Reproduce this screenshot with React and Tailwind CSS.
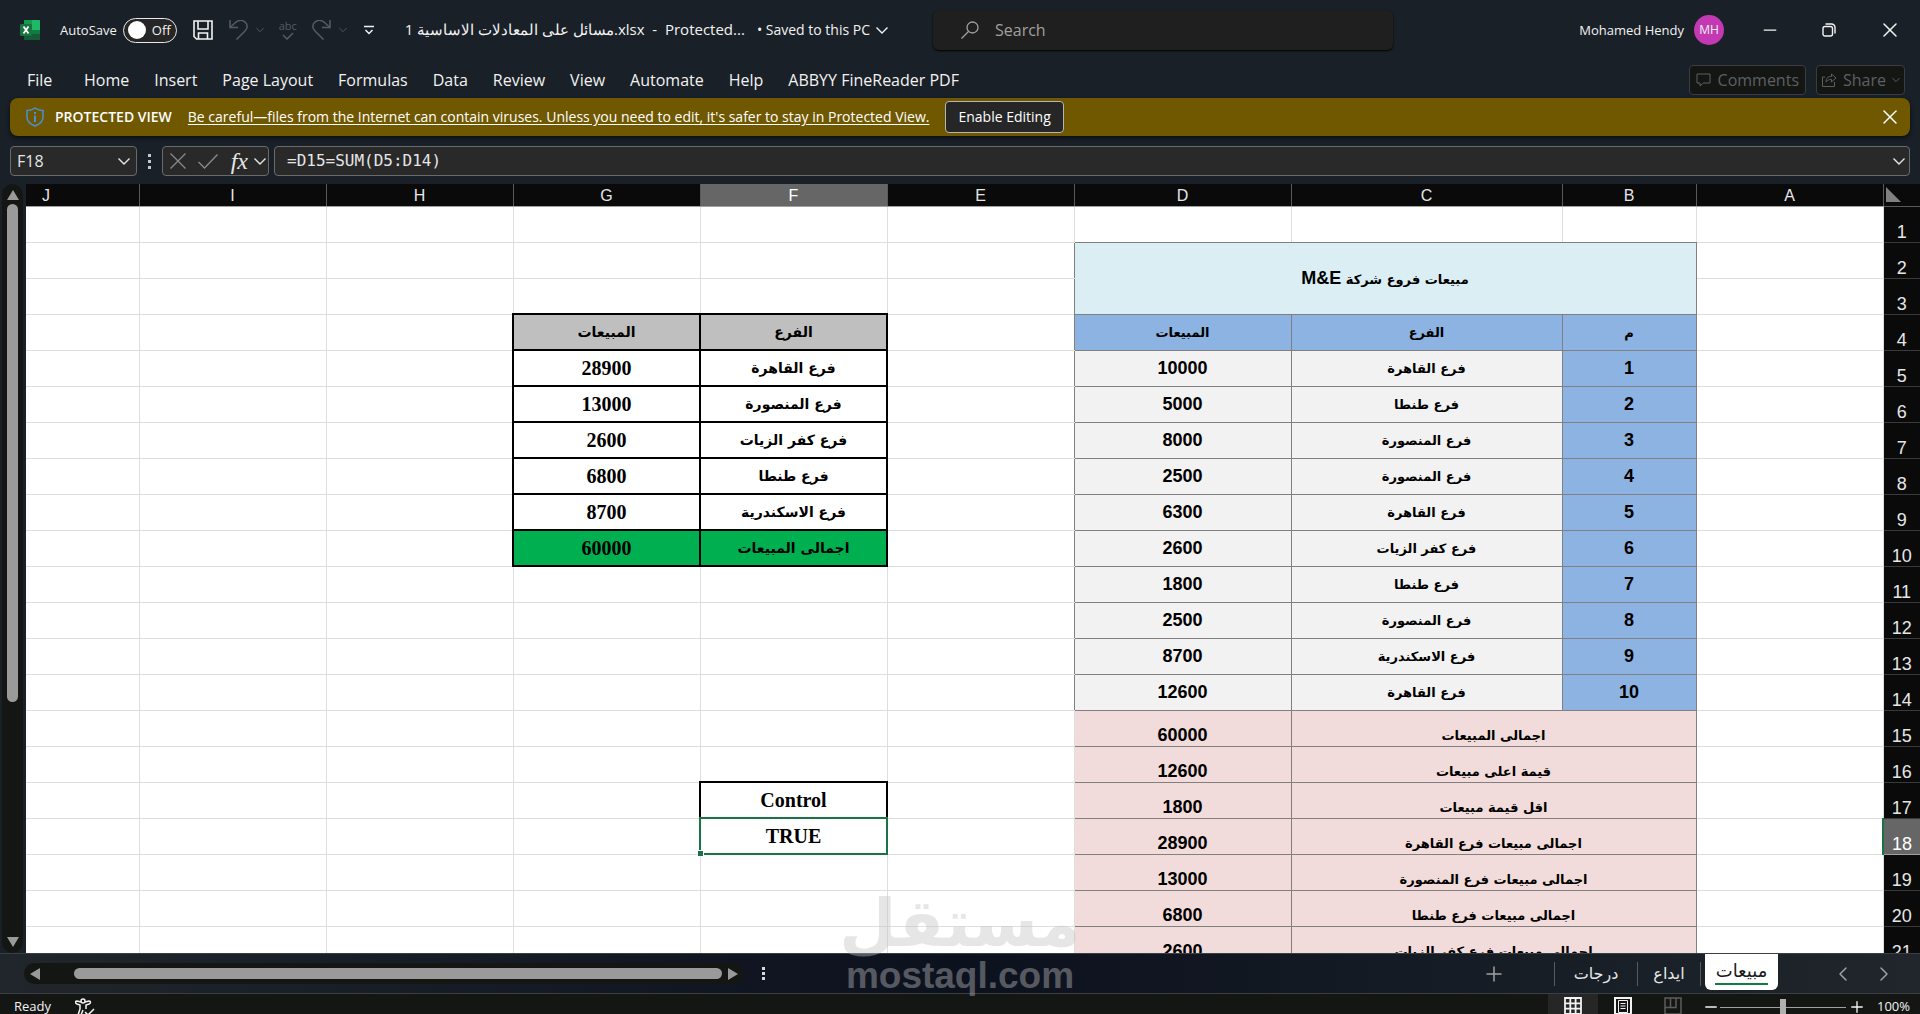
import { ChevronLeft, ChevronRight, Minus, Plus, X } from 'lucide-react';

const ribbonTabs = [
  'File',
  'Home',
  'Insert',
  'Page Layout',
  'Formulas',
  'Data',
  'Review',
  'View',
  'Automate',
  'Help',
  'ABBYY FineReader PDF',
];

const columns = [
  { name: 'J', width: '' },
  { name: 'I', width: 'w-[187px]' },
  { name: 'H', width: 'w-[187px]' },
  { name: 'G', width: 'w-[187px]' },
  { name: 'F', width: 'w-[187px]' },
  { name: 'E', width: 'w-[187px]' },
  { name: 'D', width: 'w-[217px]' },
  { name: 'C', width: 'w-[271px]' },
  { name: 'B', width: 'w-[134px]' },
  { name: 'A', width: 'w-[187px]' },
];

const sales = [
  ['فرع القاهرة', 10000],
  ['فرع طنطا', 5000],
  ['فرع المنصورة', 8000],
  ['فرع المنصورة', 2500],
  ['فرع القاهرة', 6300],
  ['فرع كفر الزيات', 2600],
  ['فرع طنطا', 1800],
  ['فرع المنصورة', 2500],
  ['فرع الاسكندرية', 8700],
  ['فرع القاهرة', 12600],
];

// rows 15 and down
const totals = [
  ['اجمالى المبيعات', 60000],
  ['قيمة اعلى مبيعات', 12600],
  ['اقل قيمة مبيعات', 1800],
  ['اجمالى مبيعات فرع القاهرة', 28900],
  ['اجمالى مبيعات فرع المنصورة', 13000],
  ['اجمالى مبيعات فرع طنطا', 6800],
  ['اجمالى مبيعات فرع كفر الزيات', 2600],
];

// rows 4 to 10, columns F and G
const branches = [
  ['الفرع', 'المبيعات'],
  ['فرع القاهرة', 28900],
  ['فرع المنصورة', 13000],
  ['فرع كفر الزيات', 2600],
  ['فرع طنطا', 6800],
  ['فرع الاسكندرية', 8700],
  ['اجمالى المبيعات', 60000],
];

const rows = Array.from({ length: 21 }, (_, i) => i + 1);

const arabic = "font-['DejaVu_Sans',sans-serif] text-sm leading-none font-bold";
const arabicSmall = "font-['DejaVu_Sans',sans-serif] text-[13px] leading-none font-bold";
const number = 'text-lg leading-none font-bold';
const serif = "font-['Liberation_Serif',serif] text-xl leading-none font-bold";
const gray = 'border-r border-b border-[#808080]';

const Chevron = ({ className = 'h-[7px] w-3' }) => (
  <svg className={className} viewBox="0 0 12 7" fill="none" stroke="currentColor" strokeWidth="1.400">
    <path d="M.5 .5L6 6 11.500 .5" />
  </svg>
);

const ExcelLogo = () => (
  <svg className="h-5 w-5" viewBox="0 0 20 20">
    <path d="M4 0h15a1 1 0 0 1 1 1v18a1 1 0 0 1-1 1H4z" fill="#107c41" />
    <path d="M4 0h8v8H4z" fill="#169a4d" />
    <path d="M12 0h7a1 1 0 0 1 1 1v9h-8z" fill="#1fb866" />
    <path d="M4 14h16v5a1 1 0 0 1-1 1H4z" fill="#155c35" />
    <rect x="0" y="4" width="12" height="12" rx="1" fill="#17733f" />
    <path d="M3.500 6.500l5 7M8.500 6.500l-5 7" stroke="#fff" strokeWidth="1.800" />
  </svg>
);

const SaveIcon = () => (
  <svg className="h-5 w-5" viewBox="0 0 20 20" fill="none" stroke="#f2f2f2" strokeWidth="1.600">
    <path d="M1 1h18v18H3.500L1 16.500z" />
    <path d="M5 1v8h10V1M5.500 19v-6h9v6" />
  </svg>
);

const UndoIcon = ({ flip }) => (
  <svg
    className={flip ? 'h-5 w-[19px] -scale-x-100' : 'h-5 w-[19px]'}
    viewBox="0 0 19 20"
    fill="none"
    stroke="#575c60"
    strokeWidth="1.500"
  >
    <path d="M1 0v7.500h8" />
    <path d="M1 7.500L6.500 2.500C10-.5 14 0 16.500 2.500s2 6-.5 8.500L7.500 19.500" />
  </svg>
);

const TitleBar = () => (
  <header className="flex h-15 shrink-0 items-center text-sm text-[#f2f2f2]">
    <div className="flex flex-1 items-center">
      <div className="ml-5">
        <ExcelLogo />
      </div>
      <label className="ml-5 flex items-center gap-1.5 text-[13px]">
        AutoSave
        <input type="checkbox" role="switch" className="peer sr-only" />
        <span className="flex h-[25px] w-[54px] items-center gap-1.5 rounded-full border border-[#e8e8e8] bg-[#262626] pl-1">
          <span className="h-[18px] w-[18px] rounded-full bg-white" />
          Off
        </span>
      </label>
      <button aria-label="Save" className="ml-4">
        <SaveIcon />
      </button>
      <button aria-label="Undo" className="ml-4 flex items-center gap-2 text-[#575c60]">
        <UndoIcon />
        <Chevron className="h-1.5 w-2" />
      </button>
      <button aria-label="Spelling" className="ml-3.5 flex w-5 flex-col items-center text-[11px] leading-3 text-[#575c60]">
        abc
        <svg className="h-2 w-3" viewBox="0 0 12 8" fill="none" stroke="currentColor" strokeWidth="1.500">
          <path d="M1 3l4 4 6-6" />
        </svg>
      </button>
      <button aria-label="Redo" className="ml-3.5 flex items-center gap-2 text-[#575c60]">
        <UndoIcon flip />
        <Chevron className="h-1.5 w-2" />
      </button>
      <button aria-label="Customize Quick Access Toolbar" className="ml-4">
        <svg className="h-3 w-3" viewBox="0 0 12 12" fill="none" stroke="#f2f2f2" strokeWidth="1.500">
          <path d="M1 2.500h10M2.500 6L6 9.500 9.500 6" />
        </svg>
      </button>
      <h1 className="ml-[30px] text-[15px] whitespace-pre">
        مسائل على المعادلات الاساسية 1.xlsx  -  Protected...
      </h1>
      <button className="ml-3 flex items-center gap-1.5 whitespace-nowrap">
        • Saved to this PC
        <Chevron />
      </button>
    </div>
    <label className="flex h-10 w-[460px] items-center gap-4 rounded-md bg-[#1f1f1f] px-7 text-[#a0a0a0] shadow-[0_1px_2px_#000000]">
      <svg className="h-[18px] w-[18px]" viewBox="0 0 18 18" fill="none" stroke="currentColor" strokeWidth="1.300">
        <circle cx="11.500" cy="6.500" r="5.500" />
        <path d="M7.500 10.500L.5 17.500" />
      </svg>
      <input
        type="search"
        placeholder="Search"
        aria-label="Search"
        className="flex-1 bg-transparent text-base outline-none placeholder:text-[#a0a0a0]"
      />
    </label>
    <div className="flex w-[527px] items-center justify-end pr-[18px]">
      <span className="text-[13px]">Mohamed Hendy</span>
      <span className="ml-2.5 flex h-[30px] w-[30px] items-center justify-center rounded-full bg-[#c239b3] text-xs">
        MH
      </span>
      <button aria-label="Minimize" className="ml-9">
        <Minus size={20} strokeWidth={1.5} />
      </button>
      <button aria-label="Restore" className="ml-[42px]">
        <svg className="h-3.5 w-3.5" viewBox="0 0 14 14" fill="none" stroke="currentColor" strokeWidth="1.400">
          <rect x="1" y="3.500" width="9.500" height="9.500" rx="2" />
          <path d="M3.500 1h6A3.500 3.500 0 0 1 13 4.500v6" />
        </svg>
      </button>
      <button aria-label="Close" className="ml-[42px]">
        <X size={24} strokeWidth={1.5} />
      </button>
    </div>
  </header>
);

const Ribbon = () => (
  <nav className="flex h-[38px] shrink-0 items-center gap-[25px] pt-0.5 pr-[15px] pl-[27px] text-base text-[#f2f2f2]">
    {ribbonTabs.map((tab) => (
      <button key={tab} className="min-w-8 text-left whitespace-nowrap">
        {tab}
      </button>
    ))}
    <div className="ml-auto flex gap-2.5 text-[#5c6063]">
      <button className="flex h-[30px] items-center gap-1.5 rounded border border-[#3a3d3f] bg-[#141614] px-1.5">
        <svg className="h-4 w-4" viewBox="0 0 16 16" fill="none" stroke="currentColor">
          <path d="M1 2h13v9H7.500L4 14v-3H1z" />
        </svg>
        Comments
      </button>
      <button className="flex h-[30px] items-center gap-1.5 rounded border border-[#3a3d3f] bg-[#141614] px-1">
        <svg className="h-4 w-4" viewBox="0 0 16 16" fill="none" stroke="currentColor">
          <path d="M4 5H1.500v9.500h12V10M5 10c0-4 2-5.500 5.500-5.500V2L15 6l-4.500 4V7.500C8 7.500 6.500 8 5 10z" />
        </svg>
        Share
        <Chevron className="h-1.5 w-2" />
      </button>
    </div>
  </nav>
);

const ProtectedView = () => (
  <div className="mx-2.5 flex h-[38px] shrink-0 items-center rounded-lg bg-[#6f5800] pr-2 pl-4 text-sm text-white shadow-[0_2px_4px_#0b0e12]">
    <svg className="h-5 w-[18px]" viewBox="0 0 18 20" fill="none" stroke="#4a90d9" strokeWidth="1.500">
      <path d="M9 1c2 1.500 4.500 2.500 8 2.500V10c0 4-3 7-8 9-5-2-8-5-8-9V3.500C4.500 3.500 7 2.500 9 1z" />
      <path d="M9 5v2M9 8.500V15" strokeWidth="2" />
    </svg>
    <strong className="ml-[11px] font-semibold">PROTECTED VIEW</strong>
    <a href="#protected" className="ml-4 underline underline-offset-2">
      Be careful—files from the Internet can contain viruses. Unless you need to edit, it's safer to stay in
      Protected View.
    </a>
    <button className="ml-4 h-8 rounded border border-[#b5b5b5] bg-[#262626] px-3">Enable Editing</button>
    <button aria-label="Close message" className="ml-auto">
      <X size={24} strokeWidth={1.5} />
    </button>
  </div>
);

const FormulaBar = () => (
  <div className="mx-2.5 mt-2.5 mb-2 flex h-[30px] shrink-0 text-[#e6e6e6]">
    <div className="flex w-[127px] items-center rounded border border-[#6a6a6a] bg-[#292929] px-1.5">
      <input
        aria-label="Name Box"
        defaultValue="F18"
        className="w-full min-w-0 flex-1 bg-transparent text-base outline-none"
      />
      <button aria-label="Open name list">
        <Chevron />
      </button>
    </div>
    <span className="flex w-[25px] flex-col items-center justify-center gap-[3px]">
      <i className="h-[3px] w-[3px] bg-[#c8c8c8]" />
      <i className="h-[3px] w-[3px] bg-[#c8c8c8]" />
      <i className="h-[3px] w-[3px] bg-[#c8c8c8]" />
    </span>
    <div className="flex w-[107px] items-center justify-between rounded border border-[#6a6a6a] bg-[#292929] pr-0.5 pl-[7px]">
      <button aria-label="Cancel" className="text-[#8a8a8a]">
        <svg className="h-4 w-4" viewBox="0 0 16 16" fill="none" stroke="currentColor" strokeWidth="1.300">
          <path d="M.5 .5l15 15M15.500 .5l-15 15" />
        </svg>
      </button>
      <button aria-label="Enter" className="text-[#8a8a8a]">
        <svg className="h-4 w-5" viewBox="0 0 20 16" fill="none" stroke="currentColor" strokeWidth="1.300">
          <path d="M.5 9l6 6L19.500 1.500" />
        </svg>
      </button>
      <button
        aria-label="Insert Function"
        className="flex items-center gap-1.5 font-['Liberation_Serif',serif] text-2xl leading-none italic"
      >
        fx
        <Chevron />
      </button>
    </div>
    <div className="ml-[5px] flex flex-1 items-center rounded border border-[#6a6a6a] bg-[#292929] pr-1 pl-3">
      <input
        aria-label="Formula Bar"
        defaultValue="=D15=SUM(D5:D14)"
        className="flex-1 bg-transparent font-['DejaVu_Sans_Mono',monospace] text-base outline-none"
      />
      <button aria-label="Expand Formula Bar">
        <Chevron />
      </button>
    </div>
  </div>
);

const BranchCell = ({ row, index }) => {
  const value = branches[row - 4][index];
  const fill = row === 4 ? 'bg-[#bfbfbf]' : row === 10 ? 'bg-[#00b050]' : 'bg-white';
  return (
    <td className={`border-2 border-black ${fill} ${typeof value === 'number' ? serif : arabic}`}>{value}</td>
  );
};

const EmptyCell = ({ line = 'border-[#dedede]' }) => <td className={`border-r border-b ${line}`} />;

const ColumnF = ({ row }) => {
  if (row >= 4 && row <= 10) return <BranchCell row={row} index={0} />;
  if (row === 17) {
    return <td className={`border-2 border-black border-b-[#1a7344] ${serif}`}>Control</td>;
  }
  if (row === 18) {
    return (
      <td className={`relative border-2 border-[#1a7344] ${serif}`}>
        TRUE
        <span className="absolute -bottom-1 -left-1 h-[7px] w-[7px] border border-white bg-[#1a7344]" />
      </td>
    );
  }
  return <EmptyCell />;
};

const SalesCells = ({ row }) => {
  if (row === 1) {
    return (
      <>
        <EmptyCell line="border-[#dedede] border-b-[#808080]" />
        <EmptyCell line="border-[#dedede] border-b-[#808080]" />
        <EmptyCell line="border-[#dedede] border-b-[#808080]" />
      </>
    );
  }
  if (row === 2) {
    return (
      <td colSpan={3} rowSpan={2} dir="rtl" className={`bg-[#daeef3] ${gray} ${arabicSmall}`}>
        مبيعات فروع شركة <span className="font-['Liberation_Sans',Arial,sans-serif] text-lg leading-none">M&amp;E</span>
      </td>
    );
  }
  if (row === 3) return null;
  if (row === 4) {
    return (
      <>
        <td className={`bg-[#8db3e2] ${gray} ${arabicSmall}`}>المبيعات</td>
        <td className={`bg-[#8db3e2] ${gray} ${arabicSmall}`}>الفرع</td>
        <td className={`bg-[#8db3e2] ${gray} ${arabicSmall}`}>م</td>
      </>
    );
  }
  if (row <= 14) {
    const [branch, amount] = sales[row - 5];
    return (
      <>
        <td className={`bg-[#f2f2f2] ${gray} ${number}`}>{amount}</td>
        <td className={`bg-[#f2f2f2] ${gray} ${arabicSmall}`}>{branch}</td>
        <td className={`bg-[#8db3e2] ${gray} ${number}`}>{row - 4}</td>
      </>
    );
  }
  const [label, amount] = totals[row - 15];
  return (
    <>
      <td className={`bg-[#f2dcdb] pt-3.5 ${gray} ${number}`}>{amount}</td>
      <td colSpan={2} className={`bg-[#f2dcdb] pt-3.5 ${gray} ${arabicSmall}`}>
        {label}
      </td>
    </>
  );
};

const Sheet = () => (
  <div className="min-w-0 flex-1 overflow-hidden bg-white">
    <table className="w-full table-fixed border-collapse text-center leading-none text-black">
      <colgroup>
        {columns.map((col) => (
          <col key={col.name} className={col.width} />
        ))}
        <col className="w-[37px]" />
      </colgroup>
      <thead>
        <tr className="h-[22px] bg-[#0a0a0a] text-base leading-none text-[#e6e6e6]">
          {columns.map((col) => (
            <th
              key={col.name}
              className={`border-r border-b border-[#5a5a5a] border-b-[#a0a0a0] pt-0.5 font-normal ${
                col.name === 'F' ? 'bg-[#666666] text-white' : ''
              } ${col.name === 'J' ? 'pl-4 text-left' : ''}`}
            >
              {col.name}
            </th>
          ))}
          <th className="border-b border-[#5a5a5a]">
            <svg className="ml-0.5 h-[15px] w-[15px]" viewBox="0 0 15 15">
              <path d="M0 0v15h15z" fill="#808080" />
            </svg>
          </th>
        </tr>
      </thead>
      <tbody>
        {rows.map((row) => (
          <tr key={row} className="h-9">
            <EmptyCell />
            <EmptyCell />
            <EmptyCell />
            {row >= 4 && row <= 10 ? <BranchCell row={row} index={1} /> : <EmptyCell />}
            <ColumnF row={row} />
            <EmptyCell line={row > 1 && row < 15 ? 'border-[#dedede] border-r-[#808080]' : 'border-[#dedede]'} />
            <SalesCells row={row} />
            <EmptyCell />
            <th
              className={
                row === 18
                  ? 'border-b border-l-2 border-[#a0a0a0] border-l-[#1a7344] bg-[#666666] pt-4 text-lg leading-none font-normal text-white'
                  : 'border-b border-[#3a3a3a] bg-[#0a0a0a] pt-4 text-lg leading-none font-normal text-[#e6e6e6]'
              }
            >
              {row}
            </th>
          </tr>
        ))}
      </tbody>
    </table>
  </div>
);

const VerticalScrollbar = () => (
  <div className="mr-[3px] ml-0.5 flex w-[21px] shrink-0 flex-col items-center rounded-full bg-[#141614] py-1.5">
    <svg className="h-2.5 w-3" viewBox="0 0 12 10">
      <path d="M6 0l6 10H0z" fill="#9a9a9a" />
    </svg>
    <div className="mt-1 flex w-full flex-1 flex-col items-center">
      <div className="h-[68%] w-[11px] rounded-full bg-[#9a9a9a]" />
    </div>
    <svg className="h-2.5 w-3" viewBox="0 0 12 10">
      <path d="M6 10l6-10H0z" fill="#9a9a9a" />
    </svg>
  </div>
);

const SheetTabs = () => (
  <div className="flex h-10 shrink-0 items-center border-t border-[#3a3f42] bg-linear-to-r from-[#20262b] via-[#0c111e] to-[#20262b] text-[#e6e6e6]">
    <div className="ml-6 flex h-[21px] w-[720px] items-center rounded-full bg-[#141614] px-1.5">
      <svg className="h-3 w-2.5" viewBox="0 0 10 12">
        <path d="M0 6l10-6v12z" fill="#9a9a9a" />
      </svg>
      <div className="flex flex-1 pr-1.5 pl-[34px]">
        <div className="h-[11px] w-full rounded-full bg-[#9a9a9a]" />
      </div>
      <svg className="h-3 w-2.5" viewBox="0 0 10 12">
        <path d="M10 6L0 0v12z" fill="#9a9a9a" />
      </svg>
    </div>
    <span className="ml-[18px] flex flex-col gap-0.5">
      <i className="h-[3px] w-[3px] bg-[#d8d8d8]" />
      <i className="h-[3px] w-[3px] bg-[#d8d8d8]" />
      <i className="h-[3px] w-[3px] bg-[#d8d8d8]" />
    </span>
    <button aria-label="New sheet" className="ml-auto text-[#a0a0a0]">
      <Plus size={24} strokeWidth={1.5} />
    </button>
    <div className="ml-12 flex h-full items-center font-['DejaVu_Sans',sans-serif] text-base">
      <button className="h-6 w-[83px] border-l border-[#5a5a5a]">درجات</button>
      <button className="h-6 w-[63px] border-l border-[#5a5a5a]">ايداع</button>
      <span className="h-6 w-[5px] border-l border-[#5a5a5a]" />
      <button className="h-9 w-[73px] self-start rounded-b-md bg-white text-lg leading-6 text-[#1a1a1a]">
        <span className="mx-2.5 block border-b-2 border-[#107c41]">مبيعات</span>
      </button>
    </div>
    <div className="flex w-[142px] justify-end gap-[17px] pr-6 text-[#a0a0a0]">
      <button aria-label="Previous sheets">
        <ChevronLeft size={24} strokeWidth={1.5} />
      </button>
      <button aria-label="Next sheets">
        <ChevronRight size={24} strokeWidth={1.5} />
      </button>
    </div>
  </div>
);

const StatusBar = () => (
  <footer className="flex h-[21px] shrink-0 items-start overflow-hidden border-t border-[#3a3f42] bg-[#141614] text-[13px] text-[#f2f2f2]">
    <span className="mt-1 ml-3.5 leading-4">Ready</span>
    <svg className="mt-1 ml-6 h-[18px] w-5" viewBox="0 0 20 18" fill="none" stroke="currentColor" strokeWidth="1.500">
      <circle cx="8" cy="3" r="2" />
      <path d="M6 4L2 3C0 3 0 5 2 6l3 1v4l-2 6c0 1 2 1 3 0l2-5M10 4l4-1c2 0 2 2 0 3l-3 1v4M10 14l3 3 6-6" />
    </svg>
    <div className="ml-auto flex items-start">
      <button aria-label="Normal view" className="flex h-5 w-[50px] justify-center bg-[#262626] pt-[3px]">
        <svg className="h-[18px] w-[18px]" viewBox="0 0 18 18" fill="none" stroke="currentColor" strokeWidth="1.800">
          <path d="M1 1h16v16H1zM1 6.300h16M1 11.600h16M6.300 1v16M11.600 1v16" />
        </svg>
      </button>
      <button aria-label="Page layout view" className="flex h-5 w-[50px] justify-center pt-[3px]">
        <svg className="h-[18px] w-[18px]" viewBox="0 0 18 18" fill="none" stroke="currentColor">
          <path d="M1 1h16v16H1z" strokeWidth="2" />
          <path d="M4.500 3.500h9v12h-9zM6.500 6.500h5M6.500 9h5M6.500 11.500h5" />
        </svg>
      </button>
      <button aria-label="Page break preview" className="flex h-5 w-[50px] justify-center pt-[3px] text-[#5c5c5c]">
        <svg className="h-[18px] w-[18px]" viewBox="0 0 18 18" fill="none" stroke="currentColor" strokeWidth="1.500">
          <path d="M1 1h16v16H1zM1 10.500h11V1M6.500 1v9.500" />
        </svg>
      </button>
      <button aria-label="Zoom out" className="mt-1 ml-1">
        <Minus size={18} strokeWidth={1.8} />
      </button>
      <label className="flex h-[26px] w-[126px] items-center">
        <input
          type="range"
          aria-label="Zoom"
          defaultValue={50}
          className="h-px w-full appearance-none bg-[#a0a0a0] [&::-webkit-slider-thumb]:h-4 [&::-webkit-slider-thumb]:w-1.5 [&::-webkit-slider-thumb]:appearance-none [&::-webkit-slider-thumb]:bg-[#b0b0b0]"
        />
      </label>
      <button aria-label="Zoom in" className="mt-1 ml-0.5">
        <Plus size={18} strokeWidth={1.8} />
      </button>
      <button className="mt-1 mr-2.5 ml-[11px] leading-4">100%</button>
    </div>
  </footer>
);

const Watermark = () => (
  <div className="pointer-events-none absolute inset-x-0 bottom-5 flex flex-col items-center leading-none font-bold text-[#c3c3c3] opacity-40">
    <span className="font-['DejaVu_Sans',sans-serif] text-[66px]">مستقل</span>
    <span className="font-['Liberation_Sans',Arial,sans-serif] text-[37px]">mostaql.com</span>
  </div>
);

const App = () => {
  return (
    <div className="relative flex h-screen flex-col overflow-hidden bg-[#1a2027] font-['Open_Sans','Noto_Sans',sans-serif]">
      <TitleBar />
      <Ribbon />
      <ProtectedView />
      <FormulaBar />
      <main className="flex min-h-0 flex-1 font-['Liberation_Sans',Arial,sans-serif]">
        <VerticalScrollbar />
        <Sheet />
      </main>
      <SheetTabs />
      <StatusBar />
      <Watermark />
    </div>
  );
};

export default App;
